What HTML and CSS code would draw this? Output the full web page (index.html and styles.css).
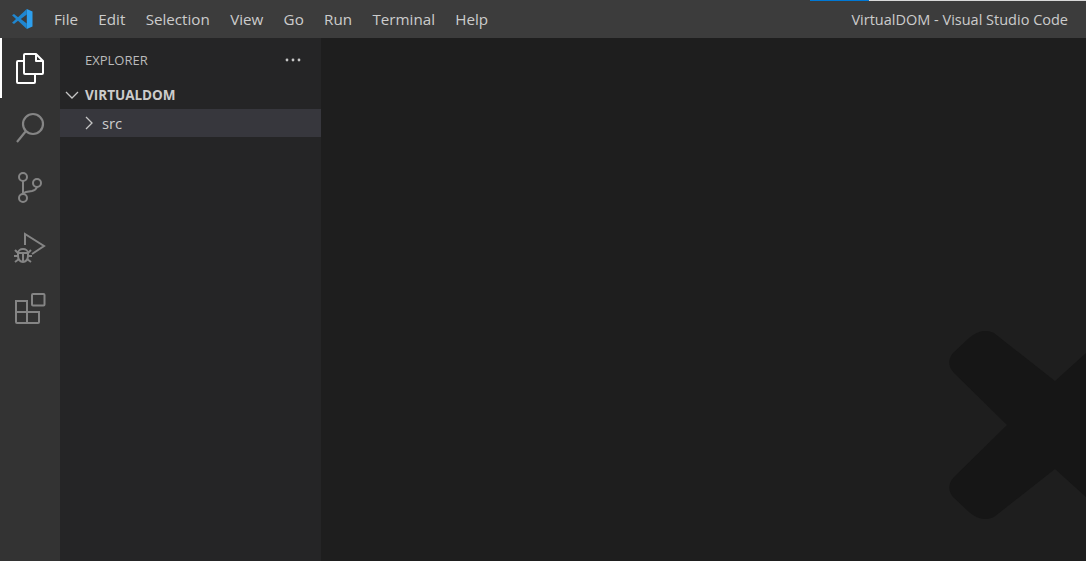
FILE: index.html
```
<!DOCTYPE html>
<html lang="en">
<head>
<meta charset="utf-8">
<title>VirtualDOM - Visual Studio Code</title>
<link rel="stylesheet" href="styles.css">
</head>
<body>
<div class="app">
  <header class="titlebar">
    <svg class="logo" viewBox="0 0 22 22" width="22" height="22" aria-hidden="true">
      <path class="logo-mid" d="M15.800 1 L21.500 3.600 V18.400 L15.800 21 Z"/>
      <path class="logo-dark" d="M15.800 1 L7 9.300 L3 6.100 L1 7.200 L5 11 L1 14.800 L3 15.900 L7 12.700 L15.800 21 V15.500 L9.800 11 L15.800 6.500 Z"/>
    </svg>
    <nav class="menu">
      <span class="menu-item">File</span>
      <span class="menu-item">Edit</span>
      <span class="menu-item">Selection</span>
      <span class="menu-item">View</span>
      <span class="menu-item">Go</span>
      <span class="menu-item">Run</span>
      <span class="menu-item">Terminal</span>
      <span class="menu-item">Help</span>
    </nav>
    <div class="window-title">VirtualDOM - Visual Studio Code</div>
    <div class="top-strip"><span class="strip-blue"></span><span class="strip-light"></span></div>
  </header>
  <div class="workbench">
    <aside class="activitybar">
      <div class="activity active">
        <svg viewBox="0 0 30 32" width="30" height="32" fill="none" stroke="#fff" stroke-width="2" stroke-linejoin="round">
          <path d="M9 9 H3 Q2 9 2 10 V30 Q2 31 3 31 H19 Q20 31 20 30 V22"/>
          <path d="M10 2 H21 L28 9 V21 Q28 22 27 22 H10 Q9 22 9 21 V3 Q9 2 10 2 Z"/>
          <path d="M21 2 V9 H28"/>
        </svg>
      </div>
      <div class="activity">
        <svg viewBox="0 0 30 32" width="30" height="32" fill="none" stroke="#858585" stroke-width="2.200">
          <circle cx="18" cy="12" r="10"/>
          <path d="M11 19 L2 30"/>
        </svg>
      </div>
      <div class="activity">
        <svg viewBox="0 0 30 36" width="30" height="36" fill="none" stroke="#858585" stroke-width="2">
          <circle cx="8" cy="7" r="4"/>
          <circle cx="8" cy="28" r="4"/>
          <circle cx="22" cy="13" r="4"/>
          <path d="M8 11 V24"/>
          <path d="M22 17 Q21 20 17 21 L11 22 Q8 23 8 24"/>
        </svg>
      </div>
      <div class="activity">
        <svg viewBox="0 0 32 34" width="32" height="34" fill="none" stroke="#858585" stroke-width="2">
          <path d="M11 14 V3 L30 15 L18 23"/>
          <path d="M4 22 a5 4 0 0 1 10 0 v3 a5 6 0 0 1 -10 0 Z"/>
          <path d="M4 22 H14 M9 22 V31 M1 19 L4 22 M17 19 L14 22 M0 25 H4 M14 25 H18 M1 31 L5 28 M17 31 L13 28"/>
        </svg>
      </div>
      <div class="activity">
        <svg viewBox="0 0 32 32" width="32" height="32" fill="none" stroke="#858585" stroke-width="2">
          <path d="M2 9 H13 V31 H3 Q2 31 2 30 Z"/>
          <path d="M2 20 H25 V30 Q25 31 24 31 H13"/>
          <rect x="18" y="2" width="12.500" height="11.500" rx="1"/>
        </svg>
      </div>
    </aside>
    <section class="sidebar">
      <div class="sidebar-head">
        <span class="sidebar-title">EXPLORER</span>
        <svg class="more" viewBox="0 0 16 4" width="16" height="4" fill="#c5c5c5"><circle cx="2" cy="2" r="1.400"/><circle cx="8" cy="2" r="1.400"/><circle cx="14" cy="2" r="1.400"/></svg>
      </div>
      <div class="root-row">
        <svg class="chev" viewBox="0 0 14 14" width="14" height="14" fill="none" stroke="#c5c5c5" stroke-width="1.300"><path d="M1 4 L7 10 L13 4"/></svg>
        <span class="root-name">VIRTUALDOM</span>
      </div>
      <div class="tree-row">
        <svg class="chev" viewBox="0 0 14 14" width="14" height="14" fill="none" stroke="#c5c5c5" stroke-width="1.300"><path d="M4 1 L10 7 L4 13"/></svg>
        <span class="tree-name">src</span>
      </div>
    </section>
    <main class="editor">
      <svg class="watermark" viewBox="0 0 138 188" width="138" height="188" aria-hidden="true">
        <path d="M107 50 L138 22 V166 L107 138 L46 186 Q34 192 21 181 L5 166 Q-3 156 6 146 L59 94 L6 42 Q-3 32 5 22 L21 7 Q34 -4 46 2 Z"/>
      </svg>
    </main>
  </div>
</div>
</body>
</html>
```
FILE: styles.css
```
* { box-sizing: border-box; }
html, body { margin: 0; height: 100%; overflow: hidden; }
body { font-family: "Open Sans", "Noto Sans", sans-serif; background: #1e1e1e; }
.app { display: flex; flex-direction: column; height: 561px; width: 1086px; }

.titlebar { position: relative; display: flex; align-items: center; height: 38px; flex: none; background: #3c3c3c; color: #cccccc; }
.logo { margin-left: 11px; flex: none; }
.logo-mid { fill: #2d9fee; }
.logo-dark { fill: #1f86d0; }
.menu { display: flex; gap: 20.300px; margin-left: 21px; font-size: 15.200px; }
.window-title { margin-left: auto; margin-right: 18px; font-size: 14.500px; color: #cccccc; }
.top-strip { position: absolute; top: 0; left: 810px; right: 0; height: 1px; display: flex; }
.strip-blue { width: 59px; background: #0078d4; }
.strip-light { flex: 1; background: #d9d9d9; }

.workbench { display: flex; flex: 1; min-height: 0; }
.activitybar { width: 60px; flex: none; background: #333333; display: flex; flex-direction: column; }
.activity { height: 60px; display: flex; align-items: center; justify-content: center; }
.activity.active { border-left: 2px solid #ffffff; padding-right: 2px; }

.sidebar { width: 261px; flex: none; background: #252526; color: #cccccc; }
.sidebar-head { height: 44px; display: flex; align-items: center; justify-content: space-between; padding: 0 20px 0 25px; }
.sidebar-title { font-size: 13px; color: #bbbbbb; }
.root-row { height: 27px; display: flex; align-items: center; padding-left: 5px; gap: 6px; padding-bottom: 2px; }
.root-name { font-size: 13.500px; font-weight: 700; }
.tree-row { height: 28px; display: flex; align-items: center; padding-left: 22px; gap: 6px; background: #37373d; }
.tree-name { font-size: 14.800px; }

.editor { position: relative; flex: 1; background: #1e1e1e; overflow: hidden; }
.watermark { position: absolute; left: 627px; top: 293px; }
.watermark path { fill: #161616; }
```
